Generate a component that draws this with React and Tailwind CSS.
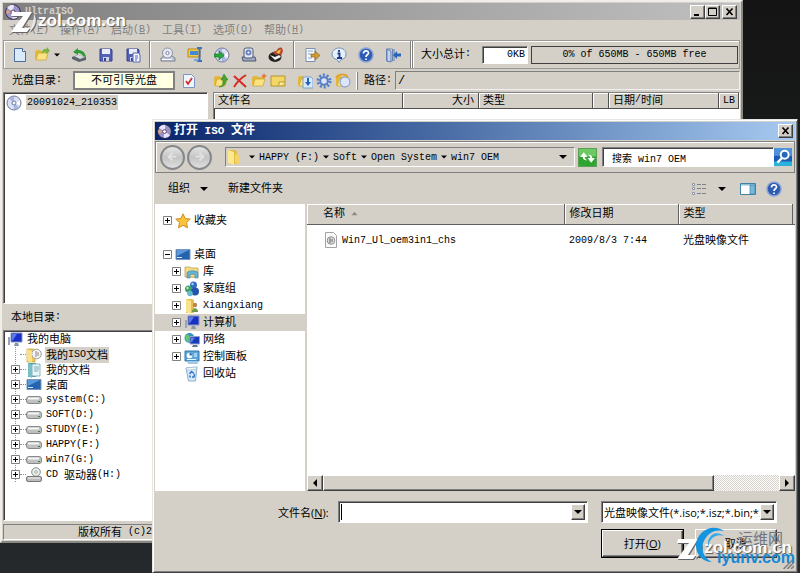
import React, { useState } from 'react';

const raised = 'border border-t-white border-l-white border-r-[#404040] border-b-[#404040] shadow-[inset_-1px_-1px_0_#808080]';
const sunken = 'border border-t-[#808080] border-l-[#808080] border-r-white border-b-white shadow-[inset_1px_1px_0_#404040]';

// Latin runs are set one size below the Chinese ones, which hang a little lower
function Txt({ children }) {
  const runs = children.match(/[\u0020-\u00ff]+|[^\u0020-\u00ff]+/g) || [];
  return (
    <span className="whitespace-pre">
      {runs.map((run, i) => (
        <span key={i} className={run.charCodeAt(0) < 256 ? 'text-[10px]' : 'align-[-2px]'}>{run}</span>
      ))}
    </span>
  );
}

// "文件" + "F" -> 文件(F) with the letter underlined
function Hotkey({ label, letter }) {
  return (
    <span className="whitespace-pre">
      <Txt>{label}</Txt>
      <span className="text-[10px]">(<u>{letter}</u>)</span>
    </span>
  );
}

function Svg({ children, className = 'size-4' }) {
  return <svg viewBox="0 0 16 16" className={`${className} shrink-0`} aria-hidden="true">{children}</svg>;
}

const folderShape = (
  <>
    <path d="M1 5l1-2h4l1 1h6v3H4l-2 6-1-1z" fill="#e2b93b" />
    <path d="M2 13l2-7h10l-2 7z" fill="#fbe382" stroke="#c79f33" strokeWidth=".7" />
  </>
);

const discShape = (
  <>
    <circle cx="8" cy="8" r="7" fill="#dcdff0" stroke="#707b9c" />
    <path d="M8 8L3 3.500A6 6 0 0 1 8 2zM8 8l5 4.500A6 6 0 0 1 8 14z" fill="#a5b4e6" />
    <path d="M8 8l6-2v4z" fill="#fff" />
    <circle cx="8" cy="8" r="2" fill="#fff" stroke="#6978ab" />
  </>
);

const caddyShape = (
  <>
    <path d="M1 11l3-2h8l3 2v3H1z" fill="#c4c8d5" stroke="#666d85" strokeWidth=".8" />
    <path d="M2 12.500h10" stroke="#fff" />
    <circle cx="7.500" cy="6" r="5" fill="#e8eaf2" stroke="#8a90ab" />
    <circle cx="7.500" cy="6" r="1.600" fill="#fff" stroke="#79809c" />
  </>
);

const monitorShape = (
  <>
    <path d="M4 1h11v9H4z" fill="#1a2fc4" stroke="#8695bd" />
    <path d="M5 2h5L6 8H5z" fill="#5d79ec" />
    <path d="M8 11h3l1 3H7z" fill="#8b93a8" />
    <path d="M1 5h2v8H1z" fill="#9ba3b8" />
  </>
);

const floppyShape = (
  <>
    <path d="M2 2h11l1 1v11H2z" fill="#5361b8" stroke="#333f8d" />
    <path d="M4 2h8v5H4z" fill="#e9ecfa" />
    <path d="M5 10h6v4H5z" fill="#cdd3ee" />
    <path d="M6 11h2v3H6z" fill="#36428f" />
  </>
);

const icons = {
  disc: discShape,
  app: (
    <>
      <circle cx="8" cy="8" r="7.300" fill="#9a93c7" stroke="#2d2748" />
      <path d="M8 8L2 4a7 7 0 0 1 7-3zM8 8l6 4a7 7 0 0 1-7 2.500z" fill="#e9e4fb" />
      <path d="M8 8L1.500 10a7 7 0 0 1 0-4z" fill="#dba07c" />
      <circle cx="8" cy="8" r="2" fill="#fff" stroke="#5b3e66" />
    </>
  ),
  newDoc: (
    <>
      <path d="M2.500 1.500h8l3 3v10h-11z" fill="#d9eafb" stroke="#4e6c9e" />
      <path d="M10.500 1.500v3h3" fill="#fff" stroke="#4e6c9e" />
    </>
  ),
  open: (
    <>
      {folderShape}
      <path d="M8 5c1-3 3-4 5-3V0l3 4-4 3V5c-2-.500-3 0-4 2z" fill="#78b43c" />
    </>
  ),
  recycleOpen: (
    <>
      <path d="M1 10l5-2 9 2v3l-7 2-7-3z" fill="#5d646b" />
      <path d="M3 9l4-1 7 2-5 2z" fill="#d8dce0" />
      <path d="M2 5l5-4v2c4 0 7 2 8 7L12 9C11 7 9 6 7 6v2z" fill="#2f9a3a" />
    </>
  ),
  save: floppyShape,
  saveAs: (
    <>
      {floppyShape}
      <path d="M8 6h6l1 2v7H8z" fill="#f4f6ff" stroke="#5968b5" />
      <path d="M10 9h3M10 11h3M10 13h2" stroke="#5968b5" />
    </>
  ),
  makeDisc: caddyShape,
  compress: (
    <>
      <path d="M1 2h12v8H1z" fill="#f3cb48" stroke="#b88b15" />
      <path d="M3 4h8v4H3z" fill="#4489d6" />
      <path d="M10 1h5M10 14h5M12.500 2v12" stroke="#3d73bd" strokeWidth="2" />
      <path d="M7 12h4v2H7z" fill="#78a8df" />
    </>
  ),
  convert: (
    <>
      {discShape}
      <path d="M0 7h5V4l5 4.500L5 13v-3H0z" fill="#2aa53a" stroke="#126f24" strokeWidth=".6" />
    </>
  ),
  mount: (
    <>
      <path d="M1 10h13l1 4H2z" fill="#9fa9bf" stroke="#4d5873" />
      <rect x="3" y="1" width="9" height="10" rx="2" fill="#e4e9f5" stroke="#4d5873" />
      <circle cx="7.500" cy="5.500" r="3" fill="#6f86bd" />
      <circle cx="7.500" cy="5.500" r="1" fill="#fff" />
    </>
  ),
  burn: (
    <>
      <ellipse cx="7" cy="10" rx="6.500" ry="5" fill="#222" />
      <path d="M2 8l5 2 4-2 2 2-6 3z" fill="#f2f2f2" />
      <path d="M5 6c1-3 3-1 4-3s3-3 5-2l1 3-2 5-2-2-3 1z" fill="#b5482a" />
      <path d="M8 5c2 0 3-3 5-2l-2 4z" fill="#f6bd43" />
    </>
  ),
  exportDoc: (
    <>
      <path d="M2 1.500h9v13H2z" fill="#f7f8fb" stroke="#7b8fae" />
      <path d="M4 4h5M4 7h3M4 11h4" stroke="#8aa3cd" />
      <path d="M7 7h4V4l5 4.500-5 4.500v-3H7z" fill="#cf9a31" stroke="#8c6110" strokeWidth=".6" />
    </>
  ),
  info: (
    <>
      <path d="M8 1c4 0 7 2.500 7 6s-2 5-5 5.500L8 15.500 6 12.500C3 12 1 10 1 7s3-6 7-6z" fill="#e6effa" stroke="#7691b6" />
      <path d="M8 3v2M6.500 6.500H8.500V11M6 11h5" stroke="#163b8e" strokeWidth="1.800" fill="none" />
    </>
  ),
  help: (
    <>
      <circle cx="8" cy="8" r="7" fill="#2f5bb5" stroke="#8aa4d4" strokeWidth="1.500" />
      <path d="M5.500 6.500c0-3.500 5-3.500 5-.500 0 2-2.500 1.500-2.500 4M8 11.500v1.500" stroke="#fff" strokeWidth="1.700" fill="none" />
    </>
  ),
  exit: (
    <>
      <path d="M1.500 2h6v12h-6z" fill="#dce5f2" stroke="#6f87ad" />
      <path d="M2 2l4 2v11l-4-1zM9 2v12" fill="#c4d4ec" stroke="#5c7fb5" />
      <path d="M8 8l4-4v2.500h4v3h-4V12z" fill="#2864b7" />
    </>
  ),
  check: (
    <>
      <path d="M2.500 1.500h8l3 3v10h-11z" fill="#eff5ff" stroke="#7b95c4" />
      <path d="M5 8l2 3 4-6" stroke="#d42e25" strokeWidth="1.800" fill="none" />
    </>
  ),
  up: (
    <>
      {folderShape}
      <path d="M6 14c4-1 4-4 4-7H8l3-6 4 6h-2c0 4-2 7-7 7z" fill="#45a532" stroke="#287a1c" strokeWidth=".5" />
    </>
  ),
  remove: <path d="M2 3l12 11M14 2C9 5 5 9 2 14" stroke="#d52a22" strokeWidth="2" fill="none" />,
  newFolder: (
    <>
      {folderShape}
      <path d="M13 0l1 2 2 1-2 1-1 2-1-2-2-1 2-1z" fill="#ee7230" />
    </>
  ),
  label: (
    <>
      <path d="M1 3h14v10H1z" fill="#f3d766" stroke="#b6952c" />
      <path d="M9 13V9h6" fill="#fff3b1" stroke="#b6952c" />
    </>
  ),
  extract: (
    <>
      {folderShape}
      <path d="M6 4h8l2 2v9H6z" fill="#d9eafc" stroke="#6892c5" strokeWidth=".8" />
      <path d="M10 5h2v4h2l-3 4-3-4h2z" fill="#2562bd" />
    </>
  ),
  gear: (
    <>
      <circle cx="8" cy="8" r="6" fill="none" stroke="#557fc9" strokeWidth="3" strokeDasharray="2 1.770" />
      <circle cx="8" cy="8" r="3.800" fill="#dbe5f7" stroke="#557fc9" strokeWidth="2" />
    </>
  ),
  folderDisc: (
    <>
      {folderShape}
      <circle cx="10" cy="9" r="5" fill="#dce6fa" stroke="#7e95c8" />
      <path d="M1 5c2-4 9-5 12-1" stroke="#dda62d" strokeWidth="2" fill="none" />
    </>
  ),
  computer: monitorShape,
  isoFolder: (
    <>
      <path d="M1 2h6l2 1v12H1z" fill="#efc85a" stroke="#c49a31" strokeWidth=".7" />
      <circle cx="10.500" cy="7" r="4.800" fill="#f3f3f3" stroke="#9d9d9d" />
      <path d="M10 4v6M12 5v4" stroke="#888" />
      <path d="M1 2l5 2v12l-5-2z" fill="#fbe08a" />
    </>
  ),
  docs: (
    <>
      <path d="M2 1h8v14H2z" fill="#54a2ad" />
      <path d="M6 2h8v12H6z" fill="#e9f4f6" stroke="#6ba6b1" strokeWidth=".8" />
      <path d="M8 5h5M8 7h5M8 9h4" stroke="#5b95ad" strokeWidth=".8" />
      <path d="M2 1l4 2v13l-4-2z" fill="#79bfc4" />
    </>
  ),
  desktop: (
    <>
      <path d="M1 2.500h14v10H1z" fill="#2563ae" stroke="#7896bd" />
      <path d="M2 3h12L2 9z" fill="#5b98d9" />
      <path d="M2 10.500h5" stroke="#d7e8fa" />
    </>
  ),
  drive: (
    <>
      <rect x=".5" y="4.500" width="15" height="7" rx="2.500" fill="#bfc1c1" stroke="#888" />
      <path d="M2 6.500h11" stroke="#f4f4f4" strokeWidth="2" />
      <path d="M12 9.500h2" stroke="#3d7948" />
    </>
  ),
  cdDrive: (
    <>
      <circle cx="10" cy="5" r="4.300" fill="#e8eeeb" stroke="#82908a" />
      <circle cx="10" cy="5" r="1.300" fill="#fff" stroke="#82908a" strokeWidth=".7" />
      <rect x=".5" y="9.500" width="15" height="5" rx="1.500" fill="#b9bcbc" stroke="#777" />
      <path d="M2 11h12" stroke="#f4f4f4" />
    </>
  ),
  star: <path d="M8 .8l2.200 4.700 5 .600-3.700 3.500 1 5.200L8 12.300l-4.500 2.500 1-5.200L.8 6.100l5-.600z" fill="#fbc23c" stroke="#d08a21" />,
  library: (
    <>
      {folderShape}
      <path d="M1 3h5l1 1h7v9H1z" fill="#f5dc85" stroke="#b7a253" strokeWidth=".8" />
      <path d="M3 14V9c0-3 11-3 11 0v5h-3v-3c0-1-5-1-5 0v3z" fill="#63b3d6" stroke="#3e85ac" strokeWidth=".6" />
    </>
  ),
  homegroup: (
    <>
      <circle cx="9.500" cy="4" r="3.500" fill="#2f6cc4" />
      <circle cx="4.500" cy="8" r="3.500" fill="#43a066" />
      <circle cx="11" cy="10.500" r="4" fill="#2355ac" />
      <circle cx="6" cy="12.500" r="2.800" fill="#64b8d0" />
      <circle cx="8.500" cy="3" r="1.200" fill="#a6d0f7" />
      <circle cx="3.500" cy="7" r="1.200" fill="#b6e5bb" />
    </>
  ),
  user: (
    <>
      <path d="M2 1h6l2 1v13H2z" fill="#e6bd50" />
      <path d="M2 1l5 2v13l-5-2z" fill="#fae28d" />
      <circle cx="11" cy="7" r="2.200" fill="#b98652" />
      <path d="M8 14c0-5 6-5 6 0z" fill="#6d9a4a" />
    </>
  ),
  network: (
    <>
      <circle cx="5.500" cy="6" r="5" fill="#2f94c4" />
      <path d="M2 3c3-1 4 1 3 3s1 3-1 4C1 9 1 5 2 3z" fill="#69c56f" />
      <path d="M6 4.500h9.500v7.500H6z" fill="#173cb8" stroke="#93a5cd" />
      <path d="M7 5.500h4L8 10H7z" fill="#5c82e6" />
      <path d="M9 13h4l1 2H8z" fill="#6a7385" />
    </>
  ),
  control: (
    <>
      <path d="M1 2h14v10H1z" fill="#5aa7dc" stroke="#3576ac" />
      <circle cx="5.500" cy="6.500" r="2.800" fill="#fff" />
      <path d="M5.500 6.500V3.700a2.800 2.800 0 0 1 2.800 2.800z" fill="#3173bc" />
      <path d="M10 5h3M10 7h3M3 10.500h9" stroke="#f2f9ff" />
      <path d="M3 12h10l1 3H4z" fill="#a2cae6" />
    </>
  ),
  recycle: (
    <>
      <path d="M2 2l11-1-1.500 14h-7z" fill="#d9e9f6" stroke="#8eaecb" />
      <path d="M2 2l11-1-1 2.500-9 .500z" fill="#f7fbff" stroke="#9cb8d1" strokeWidth=".6" />
      <path d="M5.500 8l2-2.500 2.500 2M10.500 8l-.500 3H8M6.500 11.500l-1-2" stroke="#2e77cf" strokeWidth="1.500" fill="none" />
    </>
  ),
  folder: (
    <>
      <path d="M2 1h7l2 1v13H3z" fill="#e6bc46" />
      <path d="M2 1l6 2v13l-6-2z" fill="#fce98f" />
      <path d="M9 5l4 1v9l-4-1z" fill="#f3d567" />
    </>
  ),
  isoFile: (
    <>
      <path d="M2.500.500h8l3 3v12h-11z" fill="#fbfbfb" stroke="#a3a3a3" />
      <circle cx="8" cy="8.500" r="3.800" fill="#ddd" stroke="#8d8d8d" />
      <path d="M7 6v5M9 7v3" stroke="#666" />
    </>
  ),
  refresh: (
    <>
      <rect width="16" height="16" rx="1" fill="#2ea52e" />
      <path d="M0 0h16v7H0z" fill="#6cca63" />
      <path d="M1 7.500L4.500 3 8 7.500H5.500C5.500 9 6.500 10 8 10.500 5 11 3.500 9.500 3.500 7.500zM15 8.500L11.500 13 8 8.500h2.500C10.500 7 9.500 6 8 5.500c3-.500 4.500 1 4.500 3z" fill="#fff" />
    </>
  ),
  search: (
    <>
      <rect width="16" height="16" rx="1" fill="#1c5cb5" />
      <path d="M0 0h16v7H0z" fill="#4d92da" />
      <path d="M0 12h16v4H0z" fill="#2cb0dc" />
      <circle cx="9.500" cy="6" r="3.500" fill="#2467bb" stroke="#fff" strokeWidth="1.700" />
      <path d="M7 9l-4 4" stroke="#fff" strokeWidth="2" />
    </>
  ),
  view: (
    <>
      <path d="M1.500 2.500h2v2h-2zM1.500 6.500h2v2h-2zM1.500 11.500h2v2h-2z" fill="#fff" stroke="#8d95a5" />
      <path d="M6 3.500h4M11 3.500h4M6 7.500h4M11 7.500h4M6 12.500h4M11 12.500h4" stroke="#7d8088" />
    </>
  ),
  preview: (
    <>
      <path d="M.5 2.500h15v11H.5z" fill="#fff" stroke="#3f83a6" />
      <path d="M1 3h14v1.500H1z" fill="#8bc2db" />
      <path d="M10 4h5v9h-5z" fill="#75b9dc" stroke="#3f83a6" strokeWidth=".7" />
    </>
  ),
};

function Icon({ name, className }) {
  return <Svg className={className}>{icons[name]}</Svg>;
}

function Arrow({ dir = 'down', className = 'size-2' }) {
  const paths = { down: 'M0 4h16l-8 8z', left: 'M12 0v16L4 8z', right: 'M4 0v16l8-8z', up: 'M1 12h14L8 4z' };
  return <Svg className={className}><path d={paths[dir]} fill="currentColor" /></Svg>;
}

function ToolButton({ icon, label, className = 'w-[27px]' }) {
  return (
    <button type="button" aria-label={label} className={`flex h-5 shrink-0 items-center justify-center ${className}`}>
      <Icon name={icon} />
    </button>
  );
}

function Divider() {
  return <div className="h-full w-[2px] shrink-0 border-l border-[#808080] bg-white" />;
}

function CaptionButton({ label, children }) {
  return (
    <button type="button" aria-label={label} className={`flex h-[14px] w-[15px] items-center justify-center bg-[#d4d0c8] text-black ${raised}`}>
      <svg viewBox="0 0 10 10" className="size-[10px]" fill="none" stroke="currentColor">{children}</svg>
    </button>
  );
}

const closeGlyph = <path d="M1.500 1.500l6 6.500M7.500 1.500l-6 6.500" strokeWidth="1.700" />;

function Expander({ open }) {
  return (
    <svg viewBox="0 0 9 9" className="size-[9px] shrink-0" aria-hidden="true">
      <path d="M.5.500h8v8h-8z" fill="#fff" stroke="#808080" />
      <path d={open ? 'M2 4.500h5' : 'M2 4.500h5M4.500 2v5'} stroke="#000" />
    </svg>
  );
}

const menus = [['文件', 'F'], ['操作', 'A'], ['启动', 'B'], ['工具', 'T'], ['选项', 'O'], ['帮助', 'H']];

const localDirs = [
  { icon: 'isoFolder', name: '我的ISO文档', leaf: true, selected: true },
  { icon: 'docs', name: '我的文档' },
  { icon: 'desktop', name: '桌面' },
  { icon: 'drive', name: 'system(C:)' },
  { icon: 'drive', name: 'SOFT(D:)' },
  { icon: 'drive', name: 'STUDY(E:)' },
  { icon: 'drive', name: 'HAPPY(F:)' },
  { icon: 'drive', name: 'win7(G:)' },
  { icon: 'cdDrive', name: 'CD 驱动器(H:)' },
];

const places = [
  { icon: 'library', name: '库' },
  { icon: 'homegroup', name: '家庭组' },
  { icon: 'user', name: 'Xiangxiang' },
  { icon: 'computer', name: '计算机', selected: true },
  { icon: 'network', name: '网络' },
  { icon: 'control', name: '控制面板' },
  { icon: 'recycle', name: '回收站', leaf: true },
];

const crumbs = ['HAPPY (F:)', 'Soft', 'Open System', 'win7 OEM'];

function MainWindow() {
  return (
    <section className="absolute top-0 right-[57px] bottom-[30px] left-0 flex flex-col border-2 border-t-[#efeeea] border-r-[#8a8882] border-b-[#8a8882] border-l-[#efeeea] bg-[#d4d0c8] p-px">
      <header className="flex h-[17px] shrink-0 items-center gap-1 bg-linear-to-r from-[#808080] to-[#c0c0c0] pr-[3px] pl-[2px] text-[#d4d0c8]">
        <Icon name="app" />
        <h1 className="flex-1 font-bold"><Txt>UltraISO</Txt></h1>
        <div className="flex">
          <CaptionButton label="最小化"><path d="M1 8h5" strokeWidth="2" /></CaptionButton>
          <CaptionButton label="最大化"><path d="M.5 1h8v7.500h-8zM.5 1.500h8" /></CaptionButton>
          <span className="w-[2px]" />
          <CaptionButton label="关闭">{closeGlyph}</CaptionButton>
        </div>
      </header>

      <nav className="flex h-5 shrink-0 items-center pl-[6px] text-[#808080]">
        {menus.map(([label, letter]) => (
          <button key={letter} type="button" className="w-[51px] shrink-0 text-left">
            <Hotkey label={label} letter={letter} />
          </button>
        ))}
      </nav>

      <div className="flex h-[29px] shrink-0 items-center border border-[#9c9a94] shadow-[inset_1px_1px_0_white]">
        <div className="flex w-[145px] shrink-0 items-center pl-[2px]">
          <ToolButton icon="newDoc" label="新建" />
          <button type="button" aria-label="打开" className="flex h-5 w-8 shrink-0 items-center gap-1 pl-px">
            <Icon name="open" />
            <Arrow className="size-[6px]" />
          </button>
          <ToolButton icon="recycleOpen" label="重新打开" />
          <ToolButton icon="save" label="保存" />
          <ToolButton icon="saveAs" label="另存为" />
        </div>
        <Divider />
        <div className="flex w-[142px] shrink-0 items-center justify-center">
          <ToolButton icon="makeDisc" label="制作光盘映像" />
          <ToolButton icon="compress" label="压缩" />
          <ToolButton icon="convert" label="转换格式" />
          <ToolButton icon="mount" label="加载到虚拟光驱" />
          <ToolButton icon="burn" label="刻录光盘映像" />
        </div>
        <Divider />
        <div className="flex w-[115px] shrink-0 items-center justify-center">
          <ToolButton icon="exportDoc" label="配置" />
          <ToolButton icon="info" label="信息" />
          <ToolButton icon="help" label="帮助主题" />
          <ToolButton icon="exit" label="退出" />
        </div>
        <Divider />
        <Divider />
        <label htmlFor="total" className="w-[68px] shrink-0 pl-[7px]"><Txt>大小总计:</Txt></label>
        <input id="total" readOnly value="0KB" className={`h-[18px] w-[46px] shrink-0 bg-white pr-[2px] text-right text-[10px] ${sunken}`} />
        <div className="mr-px ml-[3px] flex h-[18px] flex-1 items-center justify-center border border-[#404040]">
          <Txt>0% of 650MB - 650MB free</Txt>
        </div>
      </div>

      <div className="flex h-[23px] shrink-0 items-center">
        <span className="w-[70px] shrink-0 pl-[9px]"><Txt>光盘目录:</Txt></span>
        <div className="flex h-[19px] w-[102px] shrink-0 items-center justify-center border-2 border-[#808080] bg-[#ffffe1]">
          <Txt>不可引导光盘</Txt>
        </div>
        <ToolButton icon="check" label="校验" />
        <span className="w-[9px] shrink-0" />
        <ToolButton icon="up" label="上一级" className="w-[19px]" />
        <ToolButton icon="remove" label="删除" className="w-[19px]" />
        <ToolButton icon="newFolder" label="新建文件夹" className="w-[19px]" />
        <ToolButton icon="label" label="卷标" className="w-[19px]" />
        <span className="w-2 shrink-0" />
        <ToolButton icon="extract" label="提取" className="w-[19px]" />
        <ToolButton icon="gear" label="设置" className="w-[19px]" />
        <ToolButton icon="folderDisc" label="添加" className="w-[19px]" />
        <div className="mr-[6px] ml-1 h-[18px] w-[2px] shrink-0 border-l border-white bg-[#808080]" />
        <label htmlFor="path" className="w-[31px] shrink-0"><Txt>路径:</Txt></label>
        <input id="path" readOnly value="/" className="h-[19px] min-w-0 flex-1 border border-t-[#808080] border-r-[#f0f0f0] border-b-[#f0f0f0] border-l-[#808080] px-[2px] text-[12px]" />
      </div>

      <div className="flex min-h-0 flex-1 gap-[5px]">
        <div className="flex w-[205px] shrink-0 flex-col">
          <div className={`h-[212px] shrink-0 bg-white p-[2px] ${sunken}`}>
            <div className="flex h-[15px] items-center gap-1">
              <Icon name="disc" />
              <span className="bg-[#d4d0c8] px-px leading-[14px]"><Txt>20091024_210353</Txt></span>
            </div>
          </div>
          <div className="flex h-[26px] shrink-0 items-center pl-2"><Txt>本地目录:</Txt></div>
          <ul className={`min-h-0 flex-1 overflow-hidden bg-white p-px ${sunken}`}>
            <li>
              <div className="flex h-[15px] items-center gap-1 pl-[2px]">
                <Icon name="computer" />
                <Txt>我的电脑</Txt>
              </div>
              <ul className="ml-[10px] border-l border-dotted border-[#909090]">
                {localDirs.map((dir) => (
                  <li key={dir.name} className="-ml-[5px] flex h-[15px] items-center">
                    {dir.leaf ? <span className="w-[9px]" /> : <Expander />}
                    <span className="w-[6px] border-t border-dotted border-[#909090]" />
                    <Icon name={dir.icon} />
                    <span className={`ml-[3px] px-px leading-[14px] ${dir.selected ? 'bg-[#d4d0c8]' : ''}`}><Txt>{dir.name}</Txt></span>
                  </li>
                ))}
              </ul>
            </li>
          </ul>
        </div>

        <div className={`min-w-0 flex-1 overflow-hidden bg-white ${sunken}`}>
          <table className="w-full table-fixed border-collapse bg-[#d4d0c8] text-left">
            <colgroup>
              <col />
              <col className="w-[76px]" />
              <col className="w-[114px]" />
              <col className="w-4" />
              <col className="w-[110px]" />
              <col className="w-5" />
            </colgroup>
            <thead>
              <tr className="h-[15px]">
                {['文件名', '大小', '类型', '', '日期/时间', 'LB'].map((title) => (
                  <th key={title} className={`overflow-hidden border-r border-b border-[#505050] px-1 py-0 font-normal leading-[12px] shadow-[inset_1px_1px_0_white] ${title === '大小' ? 'text-right' : ''}`}>
                    <Txt>{title}</Txt>
                  </th>
                ))}
              </tr>
            </thead>
          </table>
        </div>
      </div>

      <footer className="mt-[3px] flex h-4 shrink-0 items-center border border-t-[#808080] border-r-white border-b-white border-l-[#808080] pl-[74px]">
        <Txt>版权所有 (c)2009</Txt>
      </footer>
    </section>
  );
}

function Place({ icon, name, leaf, open, selected, nested }) {
  return (
    <div className={`flex h-[17px] items-center gap-[3px] ${nested ? 'pl-[17px]' : 'pl-2'} ${selected ? 'bg-[#d4d0c8]' : ''}`}>
      {leaf ? <span className="w-[9px]" /> : <Expander open={open} />}
      <Icon name={icon} />
      <Txt>{name}</Txt>
    </div>
  );
}

function FileList() {
  return (
    <div className="flex min-w-0 flex-1 flex-col bg-white">
      <div className="min-h-0 flex-1 overflow-hidden">
        <table className="w-full table-fixed border-collapse text-left">
          <colgroup>
            <col />
            <col className="w-[114px]" />
            <col className="w-[114px]" />
            <col className="w-[3px]" />
          </colgroup>
          <thead>
            <tr className="h-5 bg-[#d4d0c8]">
              <th className="border-r border-b border-[#606060] pl-4 font-normal shadow-[inset_1px_1px_0_white]">
                <span className="flex items-center gap-[6px]"><Txt>名称</Txt> <Arrow dir="up" className="size-[7px] text-[#8c8a85]" /></span>
              </th>
              <th className="border-r border-b border-[#606060] pl-[5px] font-normal shadow-[inset_1px_1px_0_white]"><Txt>修改日期</Txt></th>
              <th className="border-r border-b border-[#606060] pl-[5px] font-normal shadow-[inset_1px_1px_0_white]"><Txt>类型</Txt></th>
              <td className="border-b border-[#606060]" />
            </tr>
          </thead>
          <tbody>
            <tr className="h-8">
              <td>
                <span className="flex items-center gap-[3px] pl-4"><Icon name="isoFile" /><Txt>Win7_Ul_oem3in1_chs</Txt></span>
              </td>
              <td className="pl-[5px]"><Txt>2009/8/3 7:44</Txt></td>
              <td className="pl-[5px]"><Txt>光盘映像文件</Txt></td>
            </tr>
          </tbody>
        </table>
      </div>
      <div className="flex h-4 shrink-0 bg-[conic-gradient(#fff_25%,#d4d0c8_0_50%,#fff_0_75%,#d4d0c8_0)] bg-size-[2px_2px]">
        <button type="button" aria-label="向左滚动" className={`flex w-4 shrink-0 items-center justify-center bg-[#d4d0c8] ${raised}`}><Arrow dir="left" /></button>
        <div className={`flex-6 bg-[#d4d0c8] ${raised}`} />
        <div className="flex-1" />
        <button type="button" aria-label="向右滚动" className={`flex w-4 shrink-0 items-center justify-center bg-[#d4d0c8] ${raised}`}><Arrow dir="right" /></button>
      </div>
    </div>
  );
}

function OpenDialog() {
  const [fileName, setFileName] = useState('');
  const [search, setSearch] = useState('搜索 win7 OEM');

  return (
    <section role="dialog" aria-labelledby="dialog-title" className="absolute top-[119px] right-[2px] bottom-0 left-[152px] flex flex-col border border-t-[#e8e6e0] border-r-[#404040] border-b-[#404040] border-l-[#e8e6e0] bg-[#d4d0c8] p-[2px] shadow-[inset_1px_1px_0_white,inset_-1px_-1px_0_#808080]">
      <header className="flex h-[18px] shrink-0 items-center gap-[2px] bg-linear-to-r from-[#0a246a] to-[#a6caf0] px-[2px] text-white">
        <Icon name="app" className="size-[15px]" />
        <h2 id="dialog-title" className="flex-1 pt-px text-[12px] font-bold whitespace-pre">
          打开<span className="text-[11px]"> ISO </span>文件
        </h2>
        <CaptionButton label="关闭">{closeGlyph}</CaptionButton>
      </header>

      <div className="mt-px flex h-8 shrink-0 items-center border border-[#808080] pr-[2px] pl-1 shadow-[inset_1px_1px_0_white]">
        {['M11 4L7 8l4 4M7 8h8', 'M11 4l4 4-4 4M15 8H7'].map((d, i) => (
          <button key={d} type="button" aria-label={i === 0 ? '后退' : '前进'} className="mr-[2px] size-[25px] shrink-0 rounded-full border-2 border-[#85878a] bg-linear-to-b from-[#e5e5e5] via-[#c4c4c4] to-[#dedede]">
            <svg viewBox="0 0 22 16" className="w-full" fill="none" stroke="#e2e2e2" strokeWidth="2"><path d={d} /></svg>
          </button>
        ))}
        <div className="ml-[11px] flex h-5 min-w-0 flex-1 items-center border border-t-[#808080] border-r-white border-b-white border-l-[#808080] pr-[7px]">
          <Icon name="folder" />
          <ol className="flex flex-1 items-center pl-[3px]">
            {crumbs.map((crumb) => (
              <li key={crumb} className="flex items-center">
                <Arrow className="mx-[4px] size-[6px]" />
                <Txt>{crumb}</Txt>
              </li>
            ))}
          </ol>
          <Arrow />
        </div>
        <button type="button" aria-label="刷新" className="mr-[5px] ml-[3px] shrink-0 border border-[#5d9c57]"><Icon name="refresh" className="size-[17px]" /></button>
        <input aria-label="搜索" value={search} onChange={(e) => setSearch(e.target.value)} className={`h-5 w-[172px] shrink-0 bg-white pl-[9px] text-[10px] ${sunken}`} />
        <button type="button" aria-label="开始搜索" className="shrink-0"><Icon name="search" className="size-[18px]" /></button>
      </div>

      <div className="flex h-[31px] shrink-0 items-center pr-[13px] pl-[13px]">
        <button type="button" className="flex items-center gap-[10px]"><Txt>组织</Txt> <Arrow /></button>
        <button type="button" className="ml-5"><Txt>新建文件夹</Txt></button>
        <span className="flex-1" />
        <button type="button" aria-label="更改视图" className="flex items-center gap-[11px]"><Icon name="view" /><Arrow /></button>
        <button type="button" aria-label="预览窗格" className="ml-[14px]"><Icon name="preview" /></button>
        <button type="button" aria-label="帮助" className="ml-[10px]"><Icon name="help" /></button>
      </div>

      <div className="flex min-h-0 flex-1">
        <div className="w-[150px] shrink-0 bg-white pt-2">
          <Place icon="star" name="收藏夹" />
          <div className="h-[17px]" />
          <Place icon="desktop" name="桌面" open />
          {places.map((place) => <Place key={place.name} {...place} nested />)}
        </div>
        <div className="w-[2px] shrink-0" />
        <FileList />
      </div>

      <form onSubmit={(e) => e.preventDefault()} className="grid shrink-0 grid-cols-[1fr_176px] gap-x-[13px] gap-y-[6px] pt-[10px] pr-[18px] pb-3 pl-[123px] font-['Open_Sans','Noto_Sans_CJK_SC',sans-serif]">
        <div className="flex items-center">
          <label htmlFor="file-name" className="w-[60px] shrink-0">文件名(<u>N</u>):</label>
          <div className={`flex h-[22px] min-w-0 flex-1 bg-white p-[2px] ${sunken}`}>
            <input id="file-name" value={fileName} onChange={(e) => setFileName(e.target.value)} className="min-w-0 flex-1 border-l border-black px-px outline-none" />
            <button type="button" aria-label="历史记录" className={`flex w-[14px] items-center justify-center bg-[#d4d0c8] ${raised}`}><Arrow /></button>
          </div>
        </div>
        <div className={`flex h-[22px] bg-white p-[2px] ${sunken}`}>
          <select aria-label="文件类型" className="min-w-0 flex-1 appearance-none overflow-hidden outline-none">
            <option>光盘映像文件(*.iso;*.isz;*.bin;*.nrg)</option>
          </select>
          <span className={`pointer-events-none flex w-[14px] items-center justify-center bg-[#d4d0c8] ${raised}`}><Arrow /></span>
        </div>
        <div className="col-start-2 flex gap-[11px]">
          <button type="submit" className="h-[29px] flex-1 border border-black"><span className={`flex h-full items-center justify-center ${raised}`}>打开(<u>O</u>)</span></button>
          <button type="button" className={`h-[29px] flex-1 ${raised}`}>取消</button>
        </div>
      </form>
      <Svg className="absolute right-[3px] bottom-[3px] size-3"><path d="M2 16L16 2M7 16l9-9M12 16l4-4" stroke="#808080" strokeWidth="2" /></Svg>
    </section>
  );
}

function ZolMark({ className }) {
  return (
    <div className={`pointer-events-none absolute flex items-center font-['Liberation_Sans',sans-serif] text-[17px] leading-5 font-bold text-white [text-shadow:1px_1px_1px_#555] ${className}`}>
      <svg viewBox="0 0 28 26" className="h-[26px] w-7 drop-shadow-[1px_1px_0_#666]" aria-hidden="true">
        <path d="M2 4h20L12 20h8l-3 4H1L13 8H1z" fill="#fff" />
        <path d="M24 6c4 6 1 14-5 18 3-6 5-11 5-18z" fill="#e8e8e8" />
      </svg>
      zol.com.cn
    </div>
  );
}

function App() {
  return (
    <main className="relative min-h-screen overflow-hidden bg-linear-to-b from-[#141414] to-[#25292b] font-['Liberation_Mono','Noto_Sans_CJK_SC',monospace] text-[11px] leading-[15px] text-black">
      <MainWindow />
      <OpenDialog />
      <ZolMark className="top-2 left-[10px]" />
      <ZolMark className="right-2 bottom-3" />
      <div className="pointer-events-none absolute right-[5px] bottom-[6px] flex items-end font-['Liberation_Sans','Noto_Sans_CJK_SC',sans-serif]">
        <svg viewBox="0 0 34 42" className="-mr-[10px] h-[42px] w-[34px]" aria-hidden="true">
          <path d="M31 6C18-3 2 8 3 22c1 9 8 15 16 15C9 32 7 22 12 14 16 7 23 4 31 6z" fill="#1594e0" />
          <path d="M31 11c-8-3-16 3-15 11-4-8 5-19 15-11z" fill="#36a9ea" />
        </svg>
        <div className="flex flex-col items-end">
          <span className="pr-3 text-[15px] leading-[18px] text-[#6d7580]">运维网</span>
          <span className="text-[16px] leading-[19px] font-bold text-[#1689d6]">iyunv.com</span>
        </div>
      </div>
    </main>
  );
}

export default App;
